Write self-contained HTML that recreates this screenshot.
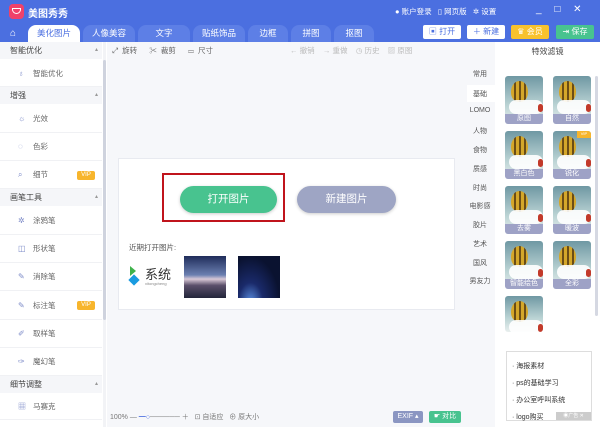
<!DOCTYPE html>
<html><head><meta charset="utf-8"><style>
*{margin:0;padding:0;box-sizing:border-box}
body{width:600px;height:427px;overflow:hidden;font-family:"Liberation Sans","Noto Sans CJK SC",sans-serif;font-size:8px;color:#555;background:#f6f7fa;position:relative}
.a{position:absolute}
.top{left:0;top:0;width:600px;height:42px;background:#4b6fe0}
.tab{top:25px;height:17px;background:#5d7fe6;border-radius:8px 8px 0 0;color:#fff;font-size:8.5px;text-align:center;line-height:17px}
.btn{top:25px;height:14px;border-radius:2px;font-size:8px;line-height:14px;text-align:center}
.left{left:0;top:42px;width:107px;height:385px;background:#fff}
.lh{left:0;width:102px;height:17px;background:#f5f6f9;font-size:8px;color:#444;padding-left:10px;line-height:17px}
.lh:after{content:"▴";position:absolute;right:4px;font-size:6px;color:#999}
.li{left:0;width:102px;border-bottom:1px solid #f0f1f4;font-size:7.5px;color:#666;padding-left:33px}
.ic{position:absolute;left:18px;color:#7d8bc8;font-size:8px}
.vip{position:absolute;left:77px;width:18px;height:9px;background:#f7b52c;color:#fff;font-size:6px;line-height:9px;text-align:center;border-radius:2px}
.th{width:38px;height:48px;border-radius:3px;overflow:hidden;background:linear-gradient(#6f98a3,#b9d2d3 60%,#e9efee)}
.th .b{position:absolute;left:6px;top:5px;width:17px;height:21px;border-radius:50% 50% 45% 45%;background:repeating-linear-gradient(90deg,#d4a72a 0 3px,#6b4d16 3px 5px)}
.th .c{position:absolute;left:4px;top:24px;width:34px;height:14px;background:#fff;border-radius:8px;opacity:.9}
.th .r{position:absolute;right:0;top:28px;width:5px;height:8px;background:#c23a2a;border-radius:3px}
.th .l{position:absolute;left:0;bottom:0;width:100%;height:10px;background:#9ea2c6;color:#fff;font-size:7px;text-align:center;line-height:10px}
.cat{left:465px;width:30px;text-align:center;font-size:7px;color:#555}
</style></head><body>
<div class="a top"></div>
<div class="a" style="left:9px;top:4px;width:15px;height:15px;border-radius:4px;background:#f0416a"></div>
<div class="a" style="left:12px;top:8px;width:9px;height:6px;border:1.5px solid #fff;border-radius:0 0 5px 5px"></div>
<div class="a" style="left:28px;top:5px;color:#fff;font-size:10px;font-weight:bold">美图秀秀</div>
<div class="a" style="left:395px;top:6px;color:#fff;font-size:7.5px">● 账户登录 &nbsp; ▯ 网页版 &nbsp; ✲ 设置</div>
<div class="a" style="left:536px;top:4px;color:#fff;font-size:10px;letter-spacing:5px">_ □ ✕</div>
<div class="a tab" style="left:3px;width:20px;background:none;font-size:10px">⌂</div>
<div class="a tab" style="left:28px;width:52px;background:#fff;color:#4b6fe0">美化图片</div>
<div class="a tab" style="left:83px;width:52px">人像美容</div>
<div class="a tab" style="left:138px;width:52px">文字</div>
<div class="a tab" style="left:193px;width:52px">贴纸饰品</div>
<div class="a tab" style="left:248px;width:40px">边框</div>
<div class="a tab" style="left:291px;width:40px">拼图</div>
<div class="a tab" style="left:334px;width:40px">抠图</div>
<div class="a btn" style="left:423px;width:38px;background:#fff;color:#4b6fe0">▣ 打开</div>
<div class="a btn" style="left:467px;width:38px;background:#fff;color:#4b6fe0">＋ 新建</div>
<div class="a btn" style="left:511px;width:38px;background:#f8c22d;color:#fff">♛ 会员</div>
<div class="a btn" style="left:556px;width:38px;background:#48c38f;color:#fff">⇥ 保存</div>

<div class="a left"></div>
<div class="a" style="left:103px;top:42px;width:3px;height:385px;background:#f2f3f6"></div>
<div class="a" style="left:103px;top:60px;width:3px;height:260px;background:#cfd3de;border-radius:2px"></div>
<div class="a lh" style="top:42px">智能优化</div>
<div class="a li" style="top:60px;height:27px;line-height:27px"><span class="ic">♁</span>智能优化</div>
<div class="a lh" style="top:87px">增强</div>
<div class="a li" style="top:104px;height:29px;line-height:29px"><span class="ic">☼</span>光效</div>
<div class="a li" style="top:133px;height:28px;line-height:28px"><span class="ic">◌</span>色彩</div>
<div class="a li" style="top:161px;height:28px;line-height:28px"><span class="ic">⌕</span>细节<span class="vip" style="top:10px">VIP</span></div>
<div class="a lh" style="top:189px">画笔工具</div>
<div class="a li" style="top:206px;height:29px;line-height:29px"><span class="ic">✲</span>涂鸦笔</div>
<div class="a li" style="top:235px;height:28px;line-height:28px"><span class="ic">◫</span>形状笔</div>
<div class="a li" style="top:263px;height:28px;line-height:28px"><span class="ic">✎</span>消除笔</div>
<div class="a li" style="top:291px;height:29px;line-height:29px"><span class="ic">✎</span>标注笔<span class="vip" style="top:10px">VIP</span></div>
<div class="a li" style="top:320px;height:28px;line-height:28px"><span class="ic">✐</span>取样笔</div>
<div class="a li" style="top:348px;height:28px;line-height:28px"><span class="ic">✑</span>魔幻笔</div>
<div class="a lh" style="top:376px">细节调整</div>
<div class="a li" style="top:393px;height:27px;line-height:27px"><span class="ic">▦</span>马赛克</div>

<div class="a" style="left:112px;top:45px;font-size:7.5px;color:#666;word-spacing:2px">⤢ 旋转 &nbsp; ✂ 裁剪 &nbsp; ▭ 尺寸</div>
<div class="a" style="left:290px;top:45px;font-size:7.5px;color:#bbb">← 撤销 &nbsp;&nbsp; → 重做 &nbsp;&nbsp; ◷ 历史 &nbsp;&nbsp; ▨ 原图</div>

<div class="a" style="left:118px;top:158px;width:337px;height:152px;background:#fff;border:1px solid #e8eaf0"></div>
<div class="a" style="left:162px;top:173px;width:123px;height:49px;border:2px solid #c0141c"></div>
<div class="a" style="left:180px;top:186px;width:97px;height:27px;border-radius:14px;background:#48c38f;color:#fff;font-size:10.5px;text-align:center;line-height:27px;box-shadow:0 1px 3px #ccc">打开图片</div>
<div class="a" style="left:297px;top:186px;width:99px;height:27px;border-radius:14px;background:#9ea5c4;color:#fff;font-size:10.5px;text-align:center;line-height:27px;box-shadow:0 1px 3px #ccc">新建图片</div>
<div class="a" style="left:129px;top:242px;font-size:7.5px;color:#555">近期打开图片:</div>
<div class="a" style="left:130px;top:266px;width:0;height:0;border-left:6px solid #3fb24b;border-top:5px solid transparent;border-bottom:5px solid transparent"></div>
<div class="a" style="left:130px;top:276px;width:8px;height:8px;background:#1a9be0;transform:rotate(45deg)"></div>
<div class="a" style="left:145px;top:264px;font-size:13px;color:#333">系统</div>
<div class="a" style="left:145px;top:281px;font-size:4px;color:#888">xitongcheng</div>
<div class="a" style="left:184px;top:256px;width:42px;height:42px;background:linear-gradient(#1f2c5a,#6b7fb0 45%,#d8c8d6 55%,#5a4f6a 70%,#23253a)"></div>
<div class="a" style="left:238px;top:256px;width:42px;height:42px;background:radial-gradient(ellipse at 30% 110%,#5a8ee0 0,#1a2a6a 30%,#0a1230 70%)"></div>

<div class="a" style="left:110px;top:412px;font-size:7px;color:#777">100% — <span style="color:#4b6fe0">━○</span>────── ＋ &nbsp; ⊡ 自适应 &nbsp; ⊕ 原大小</div>
<div class="a" style="left:393px;top:411px;width:30px;height:12px;background:#8b96c2;color:#fff;font-size:7px;text-align:center;line-height:12px;border-radius:2px">EXIF ▴</div>
<div class="a" style="left:429px;top:411px;width:32px;height:12px;background:#48c38f;color:#fff;font-size:7px;text-align:center;line-height:12px;border-radius:2px">☛ 对比</div>

<div class="a" style="left:465px;top:42px;width:135px;height:385px;background:#f6f7fa"></div>
<div class="a" style="left:495px;top:42px;width:105px;height:385px;background:#fff"></div>
<div class="a" style="left:495px;top:42px;width:105px;height:20px;text-align:center;line-height:20px;font-size:8px;color:#444">特效滤镜</div>
<div class="a" style="left:467px;top:85px;width:28px;height:17px;background:#fff"></div>
<div class="a cat" style="top:69px">常用</div>
<div class="a cat" style="top:89px">基础</div>
<div class="a cat" style="top:107px">LOMO</div>
<div class="a cat" style="top:126px">人物</div>
<div class="a cat" style="top:145px">食物</div>
<div class="a cat" style="top:164px">质感</div>
<div class="a cat" style="top:183px">时尚</div>
<div class="a cat" style="top:201px">电影感</div>
<div class="a cat" style="top:220px">胶片</div>
<div class="a cat" style="top:239px">艺术</div>
<div class="a cat" style="top:258px">国风</div>
<div class="a cat" style="top:276px">男友力</div>
<div class="a" style="left:595px;top:76px;width:3px;height:240px;background:#d5d8e2;border-radius:2px"></div>

<div class="a th" style="left:505px;top:76px"><div class="b"></div><div class="c"></div><div class="r"></div><div class="l">原图</div></div>
<div class="a th" style="left:553px;top:76px"><div class="b"></div><div class="c"></div><div class="r"></div><div class="l">自然</div></div>
<div class="a th" style="left:505px;top:131px"><div class="b"></div><div class="c"></div><div class="r"></div><div class="l">黑白色</div></div>
<div class="a th" style="left:553px;top:131px"><div class="b"></div><div class="c"></div><div class="r"></div><div class="l">锐化</div><div style="position:absolute;right:0;top:0;width:14px;height:7px;background:#f7b52c;font-size:4px;color:#fff;text-align:center">VIP</div></div>
<div class="a th" style="left:505px;top:186px"><div class="b"></div><div class="c"></div><div class="r"></div><div class="l">去雾</div></div>
<div class="a th" style="left:553px;top:186px"><div class="b"></div><div class="c"></div><div class="r"></div><div class="l">暖波</div></div>
<div class="a th" style="left:505px;top:241px"><div class="b"></div><div class="c"></div><div class="r"></div><div class="l">智能绘色</div></div>
<div class="a th" style="left:553px;top:241px"><div class="b"></div><div class="c"></div><div class="r"></div><div class="l">全彩</div></div>
<div class="a th" style="left:505px;top:296px;height:36px"><div class="b"></div><div class="c"></div><div class="r"></div></div>

<div class="a" style="left:506px;top:351px;width:86px;height:70px;border:1px solid #ddd;background:#fff;font-size:7px;color:#333;padding:6px 0 0 5px;line-height:17px">
· 海报素材<br>· ps的基础学习<br>· 办公室呼叫系统<br>· logo购买</div>
<div class="a" style="left:556px;top:412px;width:35px;height:8px;background:#ccc;color:#fff;font-size:5px;text-align:center;line-height:8px">◉广告 ✕</div>
</body></html>
